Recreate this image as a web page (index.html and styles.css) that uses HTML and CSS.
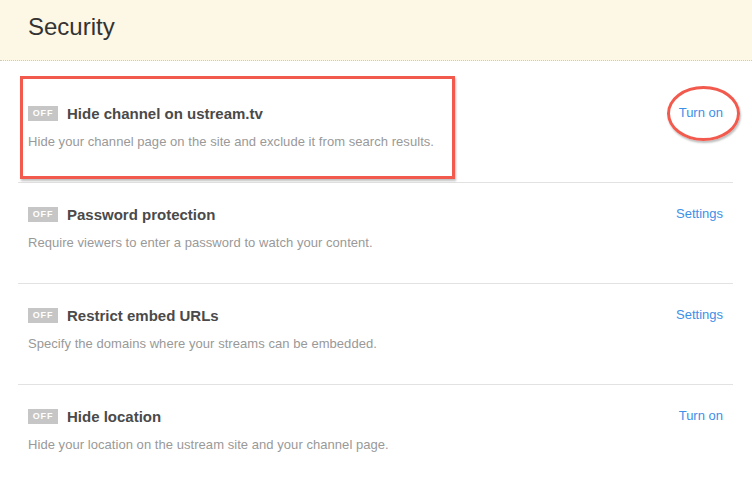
FILE: index.html
```html
<!DOCTYPE html>
<html>
<head>
<meta charset="utf-8">
<link rel="stylesheet" href="styles.css">
</head>
<body>
<header class="head"><h1 class="head-title">Security</h1></header>
<ul class="list">
  <li class="row">
    <div class="row-main">
      <div class="row-top"><span class="badge">OFF</span><span class="title">Hide channel on ustream.tv</span></div>
      <p class="desc">Hide your channel page on the site and exclude it from search results.</p>
    </div>
    <a class="link">Turn on</a>
    <span class="mark-rect"></span>
    <span class="mark-ellipse"></span>
  </li>
  <li class="row">
    <div class="row-main">
      <div class="row-top"><span class="badge">OFF</span><span class="title">Password protection</span></div>
      <p class="desc">Require viewers to enter a password to watch your content.</p>
    </div>
    <a class="link">Settings</a>
  </li>
  <li class="row">
    <div class="row-main">
      <div class="row-top"><span class="badge">OFF</span><span class="title">Restrict embed URLs</span></div>
      <p class="desc">Specify the domains where your streams can be embedded.</p>
    </div>
    <a class="link">Settings</a>
  </li>
  <li class="row">
    <div class="row-main">
      <div class="row-top"><span class="badge">OFF</span><span class="title">Hide location</span></div>
      <p class="desc">Hide your location on the ustream site and your channel page.</p>
    </div>
    <a class="link">Turn on</a>
  </li>
</ul>
</body>
</html>
```
FILE: styles.css
```css
* { box-sizing: border-box; }
html, body { margin: 0; padding: 0; background: #fff; }
body { font-family: "Liberation Sans", Arial, sans-serif; width: 752px; height: 497px; overflow: hidden; }
.head {
  height: 61px;
  background: #fdf7e6;
  border-bottom: 1px dotted #cfcac0;
  padding: 0 28px;
  display: flex;
  align-items: center;
}
.head-title { margin: 0; font-size: 24px; font-weight: normal; color: #333; padding-bottom: 6px; }
.list { list-style: none; margin: 0 19px 0 18px; padding: 21px 0 0; }
.row {
  position: relative;
  height: 101px;
  border-bottom: 1px solid #e2e2e2;
  padding: 21px 10px 0;
  display: flex;
  justify-content: space-between;
  align-items: flex-start;
}
.row:last-child { border-bottom: none; }
.row-top { display: flex; align-items: center; height: 20px; }
.badge {
  width: 30px; height: 15px;
  background: #c6c6c6;
  color: #fff;
  font-size: 9px; font-weight: bold; letter-spacing: 0.8px;
  display: flex; align-items: center; justify-content: center;
  margin-right: 9px;
}
.title { font-size: 15px; font-weight: bold; color: #4a4a4a; }
.desc { margin: 10px 0 0; font-size: 13px; line-height: 18px; color: #999; letter-spacing: 0.05px; }
.link { font-size: 13px; line-height: 20px; color: #3d8fe8; }
.mark-rect {
  position: absolute; left: 2px; top: -6px; width: 435px; height: 103px;
  border: 3px solid #f25a4d;
  box-shadow: 1px 2px 2px rgba(0,0,0,0.25);
}
.mark-ellipse {
  position: absolute; right: -7px; top: 4px; width: 73px; height: 55px;
  border: 3px solid #f25a4d; border-radius: 50%;
  box-shadow: 1px 2px 2px rgba(0,0,0,0.25);
}
```
